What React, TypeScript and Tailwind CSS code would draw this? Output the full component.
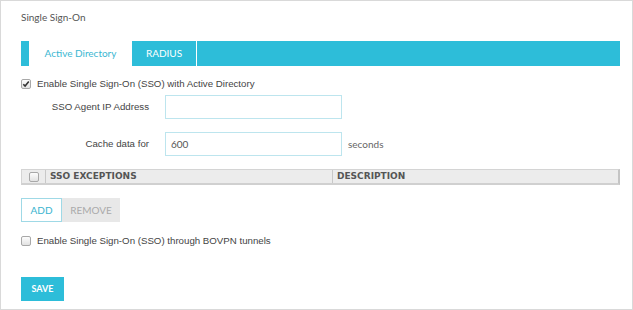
import React from "react";

const lato = { fontFamily: "Lato, 'Open Sans', sans-serif" };
const arial = { fontFamily: "'Liberation Sans', Arial, sans-serif" };
const dejavu = { fontFamily: "'DejaVu Sans', Verdana, sans-serif" };

function Check({ checked }: { checked?: boolean }) {
  return (
    <span className="relative inline-flex h-[10px] w-[10px] shrink-0 items-center justify-center rounded-[2px] border border-[#a8a8a8] bg-gradient-to-b from-[#fdfdfd] to-[#e2e2e2]">
      {checked && (
        <svg width="8" height="8" viewBox="0 0 8 8" className="absolute">
          <path d="M1.3 4.2 L3.1 6 L6.8 1.6" fill="none" stroke="#333" strokeWidth="1.6" />
        </svg>
      )}
    </span>
  );
}

export default function App() {
  return (
    <div className="h-[310px] w-[633px] border border-[#d9d9d9] bg-white pl-[20px] pr-[12px] text-[#555]">
      <div className="mt-[8px] h-[16px] text-[10px] leading-[16px] text-[#555]" style={lato}>
        Single Sign-On
      </div>

      <div className="mt-[16px] flex h-[25px] bg-[#2dbdd9] pl-[8px]" style={lato}>
        <div className="flex w-[103px] items-center justify-center bg-white text-[10px] text-[#3bb7d2]">
          Active Directory
        </div>
        <div className="flex w-[65px] items-center justify-center border-r border-white text-[10px] text-white">
          RADIUS
        </div>
      </div>

      <div className="mt-[11px] flex h-[14px] items-center gap-[6px] text-[9.7px] text-[#444]" style={arial}>
        <Check checked />
        <span>Enable Single Sign-On (SSO) with Active Directory</span>
      </div>

      <div className="mt-[4px] flex items-center">
        <div className="w-[128px] text-right text-[9.7px] text-[#444]" style={arial}>
          SSO Agent IP Address
        </div>
        <div className="ml-[16px] h-[24px] w-[177px] border border-[#bde5ee] bg-white" />
      </div>

      <div className="mt-[13px] flex items-center">
        <div className="w-[128px] text-right text-[9.7px] text-[#444]" style={arial}>
          Cache data for
        </div>
        <div
          className="ml-[16px] flex h-[24px] w-[177px] items-center border border-[#bde5ee] bg-white pl-[5px] text-[10px] text-[#555]"
          style={lato}
        >
          600
        </div>
        <div className="ml-[6px] text-[10px] text-[#666]" style={lato}>
          seconds
        </div>
      </div>

      <div
        className="mt-[13px] flex h-[16px] border border-[#d4d4d4] border-b-2 border-r-2 border-b-[#d0d0d0] border-r-[#c4c4c4] bg-[#ececec] text-[9px] font-bold text-[#555]"
        style={dejavu}
      >
        <div className="flex w-[24px] items-center justify-center border-r border-[#c8c8c8]">
          <Check />
        </div>
        <div className="flex w-[287px] items-center border-r border-[#c8c8c8] pl-[4px]">SSO EXCEPTIONS</div>
        <div className="flex flex-1 items-center pl-[4px]">DESCRIPTION</div>
      </div>

      <div className="mt-[13px] flex h-[24px] text-[10px]" style={lato}>
        <div className="flex w-[41px] items-center justify-center border border-[#9fd9e6] bg-white text-[#39b4cf]">
          ADD
        </div>
        <div className="flex w-[58px] items-center justify-center bg-[#e8e8e8] text-[#aaa]">REMOVE</div>
      </div>

      <div className="mt-[12px] flex h-[14px] items-center gap-[6px] text-[9.7px] text-[#444]" style={arial}>
        <Check />
        <span>Enable Single Sign-On (SSO) through BOVPN tunnels</span>
      </div>

      <div
        className="mt-[29px] flex h-[24px] w-[43px] items-center justify-center bg-[#2dbdd9] text-[9px] font-bold text-white"
        style={lato}
      >
        SAVE
      </div>
    </div>
  );
}
